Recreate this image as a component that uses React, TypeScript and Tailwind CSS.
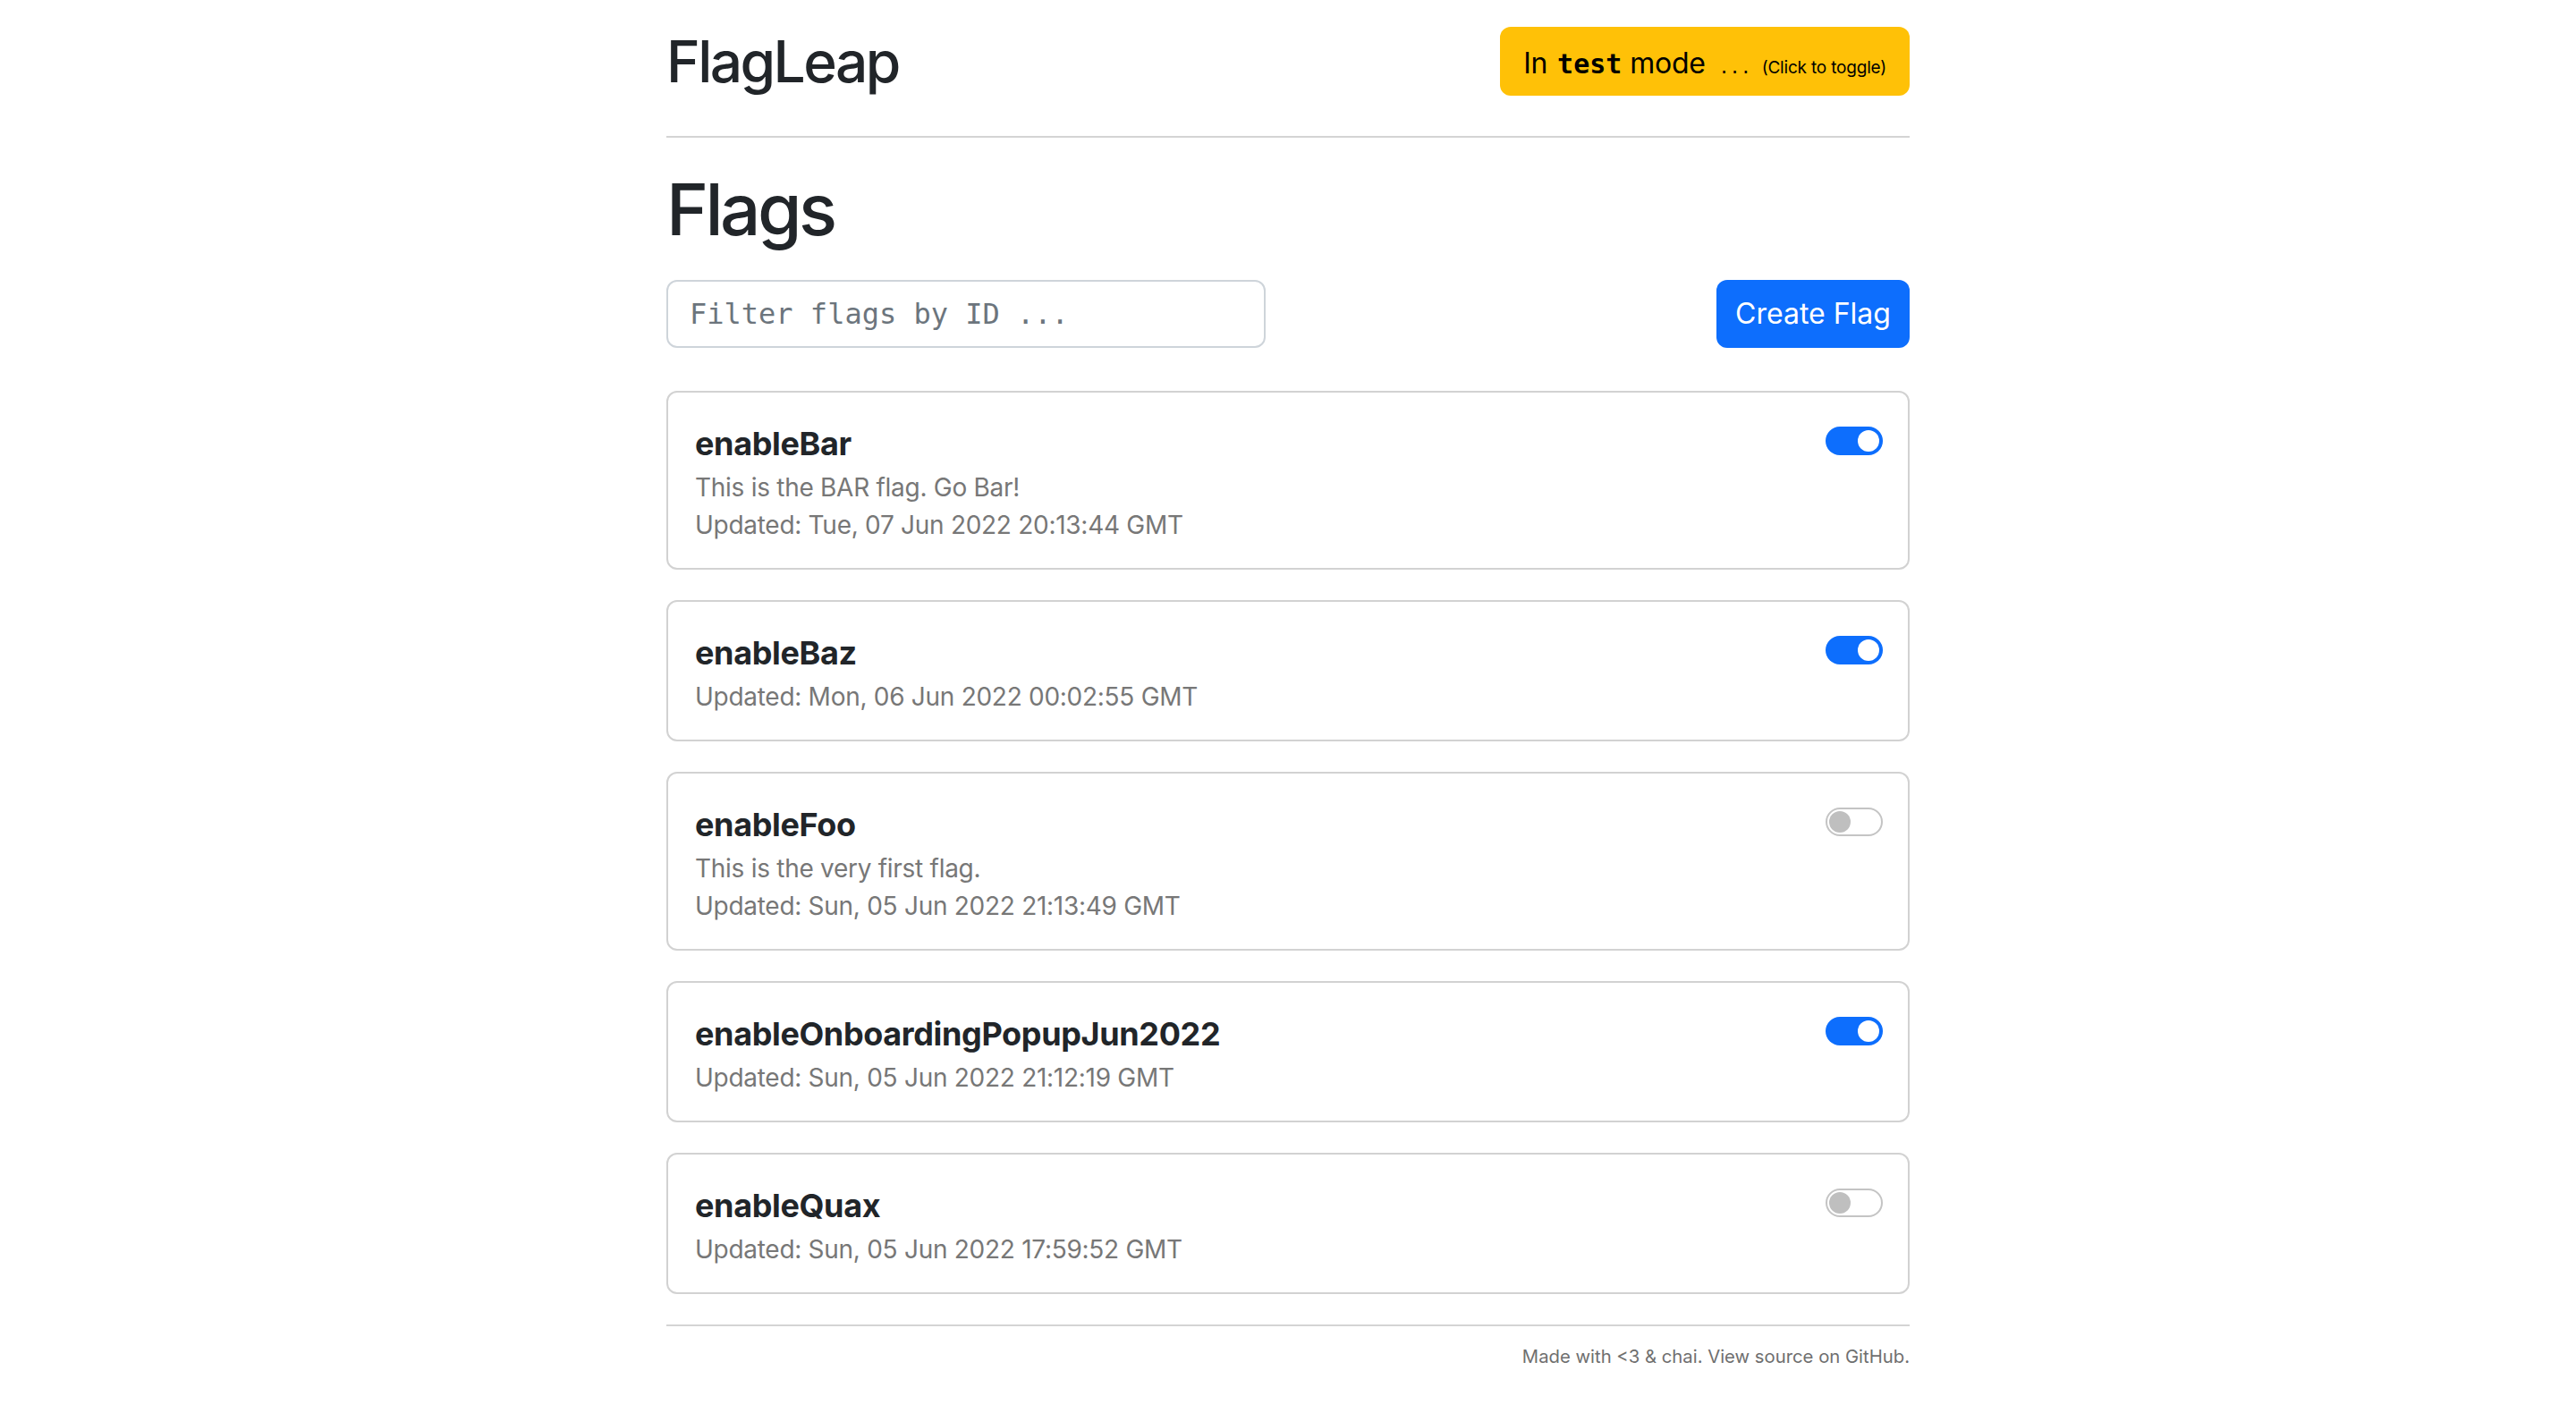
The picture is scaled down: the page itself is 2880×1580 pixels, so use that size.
import React from "react";

type Flag = { id: string; desc?: string; updated: string; on: boolean };

const flags: Flag[] = [
  { id: "enableBar", desc: "This is the BAR flag. Go Bar!", updated: "Updated: Tue, 07 Jun 2022 20:13:44 GMT", on: true },
  { id: "enableBaz", updated: "Updated: Mon, 06 Jun 2022 00:02:55 GMT", on: true },
  { id: "enableFoo", desc: "This is the very first flag.", updated: "Updated: Sun, 05 Jun 2022 21:13:49 GMT", on: false },
  { id: "enableOnboardingPopupJun2022", updated: "Updated: Sun, 05 Jun 2022 21:12:19 GMT", on: true },
  { id: "enableQuax", updated: "Updated: Sun, 05 Jun 2022 17:59:52 GMT", on: false },
];

function Toggle({ on }: { on: boolean }) {
  return on ? (
    <div className="w-[64px] h-[32px] rounded-full bg-[#0d6efd] flex items-center justify-end pr-[4px] shrink-0">
      <div className="w-[24px] h-[24px] rounded-full bg-white" />
    </div>
  ) : (
    <div className="w-[64px] h-[32px] rounded-full border-2 border-[#c4c4c4] bg-white flex items-center justify-start pl-[2px] shrink-0">
      <div className="w-[24px] h-[24px] rounded-full bg-[#bfbfbf]" />
    </div>
  );
}

export default function App() {
  return (
    <div className="min-h-screen bg-white font-['Inter',sans-serif] text-[#212529]">
      <div className="w-[1390px] mx-auto">
        <header className="pt-[30px] flex items-center justify-between">
          <div className="text-[64px] leading-[77px] font-medium tracking-[-0.04em]">FlagLeap</div>
          <button className="h-[77px] px-[26px] rounded-[12px] bg-[#ffc107] text-black flex items-center">
            <span className="flex items-baseline pt-[4px]">
              <span className="text-[32px] tracking-[-0.01em]">In</span>
              <span className="font-['DejaVu_Sans_Mono',monospace] font-bold text-[30px] ml-[11px] mr-[9px]">test</span>
              <span className="text-[32px] tracking-[-0.01em]">mode</span>
              <span className="font-['DejaVu_Sans_Mono',monospace] text-[20px] ml-[15px] tracking-[0px]">...</span>
              <span className="text-[19px] ml-[12px] tracking-[-0.01em]">(Click to toggle)</span>
            </span>
          </button>
        </header>
        <div className="mt-[45px] h-[2px] bg-[#d4d4d4]" />
        <h1 className="mt-[32px] text-[80px] leading-[96px] font-medium tracking-[-0.045em]">Flags</h1>
        <div className="mt-[31px] flex items-center justify-between">
          <div className="w-[670px] h-[76px] border-2 border-[#ced4da] rounded-[12px] px-[24px] flex items-center">
            <span className="font-['DejaVu_Sans_Mono',monospace] text-[32px] text-[#6c757d]">Filter flags by ID ...</span>
          </div>
          <button className="w-[216px] h-[76px] rounded-[12px] bg-[#0d6efd] text-white text-[32px]">Create Flag</button>
        </div>
        <div className="mt-[48px] flex flex-col gap-[34px]">
          {flags.map((f) => (
            <div key={f.id} className="border-2 border-[#d2d2d2] rounded-[12px] pt-[33px] pb-[27px] pl-[30px] pr-[32px] flex justify-between">
              <div>
                <div className="text-[36px] leading-[48px] font-bold tracking-[-0.01em]">{f.id}</div>
                <div className="mt-[4px] text-[28px] leading-[42px] tracking-[-0.01em] text-[#777777]">
                  {f.desc && <div>{f.desc}</div>}
                  <div>{f.updated}</div>
                </div>
              </div>
              <div className="mt-[5px] -mr-[4px]">
                <Toggle on={f.on} />
              </div>
            </div>
          ))}
        </div>
        <div className="mt-[34px] h-[2px] bg-[#d4d4d4]" />
        <div className="mt-[17px] pb-[40px] text-right text-[20.3px] leading-[33px] text-[#6f6f6f]">
          Made with &lt;3 &amp; chai. View source on GitHub.
        </div>
      </div>
    </div>
  );
}
